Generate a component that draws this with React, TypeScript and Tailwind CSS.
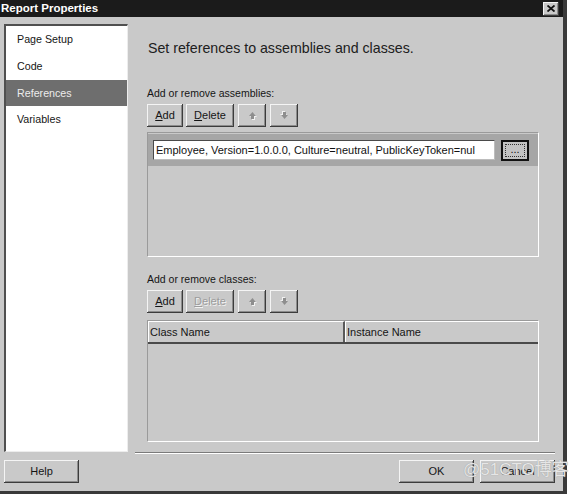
import React from "react";

const FONT = { fontFamily: '"Liberation Sans", Arial, "Noto Sans CJK SC", sans-serif' };

const raised =
  "bg-[#c9c9c9] shadow-[inset_-1px_-1px_0_#3c3c3c,inset_1px_1px_0_#f4f4f4,inset_-2px_-2px_0_#8c8c8c]";

function Btn({ children, className = "", disabled = false }: { children: React.ReactNode; className?: string; disabled?: boolean }) {
  return (
    <div
      className={`${raised} h-[23px] flex items-center justify-center text-[11px] leading-none ${
        disabled ? "text-[#9c9c9c] [text-shadow:1px_1px_0_#f2f2f2]" : "text-[#151515]"
      } ${className}`}
    >
      {children}
    </div>
  );
}

function Arrow({ down = false }: { down?: boolean }) {
  return (
    <svg width="9" height="9" viewBox="0 0 9 9" className={down ? "rotate-180" : ""}>
      <path d="M5.5 2 L9 6 H7 V9 H4 V6 H2 Z" fill="#f2f2f2" />
      <path d="M4.5 1 L8 5 H6 V8 H3 V5 H1 Z" fill="#8e8e8e" />
    </svg>
  );
}

function ButtonRow({ deleteDisabled }: { deleteDisabled?: boolean }) {
  return (
    <div className="flex ml-[12px]">
      <Btn className="w-[36px]">
        <span>
          <span className="underline">A</span>dd
        </span>
      </Btn>
      <Btn className="w-[48px] ml-[3px]" disabled={deleteDisabled}>
        <span>
          <span className="underline">D</span>elete
        </span>
      </Btn>
      <Btn className="w-[28px] ml-[4px]">
        <Arrow />
      </Btn>
      <Btn className="w-[28px] ml-[4px]">
        <Arrow down />
      </Btn>
    </div>
  );
}

export default function App() {
  const items = [
    { label: "Page Setup", h: "h-[27px]" },
    { label: "Code", h: "h-[27px]" },
    { label: "References", h: "h-[26px]", sel: true },
    { label: "Variables", h: "h-[26px]" },
  ];
  return (
    <div className="relative w-[570px] h-[497px] bg-white overflow-hidden" style={FONT}>
      <div className="w-[567px] h-[494px] bg-[#c9c9c9] border-r-4 border-b-[3px] border-[#3a3a3a] flex flex-col">
        {/* title bar */}
        <div className="h-[17px] bg-[#1b1b1b] flex items-center justify-between">
          <span className="pl-[1px] text-white font-bold text-[11.5px] leading-none">Report Properties</span>
          <div className={`${raised} w-[16px] h-[14px] mr-[4px] flex items-center justify-center`}>
            <svg width="8" height="7" viewBox="0 0 8 7">
              <path d="M0.5 0.5 L7.5 6.5 M7.5 0.5 L0.5 6.5" stroke="#111" strokeWidth="1.8" />
            </svg>
          </div>
        </div>

        <div className="flex-1 flex flex-col px-[4px] pt-[7px]">
          <div className="flex items-start h-[430px]">
            {/* sidebar */}
            <div className="w-[124px] h-[428px] bg-white border-l-2 border-t-2 border-l-[#505050] border-t-[#505050] border-r border-b border-r-[#ededed] border-b-[#ededed]">
              {items.map((it) => (
                <div
                  key={it.label}
                  className={`${it.h} flex items-center pl-[11px] text-[10.7px] ${
                    it.sel ? "bg-[#6e6e6e] text-[#ececec]" : "text-[#151515]"
                  }`}
                >
                  {it.label}
                </div>
              ))}
            </div>

            {/* main */}
            <div className="ml-[7px] w-[420px] flex flex-col">
              <div className="mt-[15px] pl-[13px] text-[14.2px] leading-[18px] text-[#202020]">
                Set references to assemblies and classes.
              </div>

              <div className="mt-[30px] pl-[12px] text-[10.5px] leading-[13px] text-[#151515]">Add or remove assemblies:</div>
              <div className="mt-[4px]">
                <ButtonRow />
              </div>

              <div className="mt-[5px] ml-[12px] w-[392px] h-[125px] border-t border-l border-t-[#9a9a9a] border-l-[#9a9a9a] border-r border-b border-r-white border-b-white">
                <div className="mt-[1px] h-[32px] bg-[#a6a6a6] flex items-center">
                  <div className="ml-[5px] w-[342px] h-[20px] bg-white border-t border-l border-t-[#4a4a4a] border-l-[#4a4a4a] border-r border-b border-r-[#bdbdbd] border-b-[#bdbdbd] flex items-center pl-[2px] text-[11px] text-[#111] whitespace-nowrap overflow-hidden">
                    Employee, Version=1.0.0.0, Culture=neutral, PublicKeyToken=nul
                  </div>
                  <div className="ml-[6px] w-[28px] h-[21px] border-2 border-[#111] bg-[#c4c4c4] p-[2px]">
                    <div className="w-full h-full border border-dotted border-[#333] flex items-end justify-center pb-[1px] text-[11px] leading-none text-[#111]">
                      ...
                    </div>
                  </div>
                </div>
              </div>

              <div className="mt-[16px] pl-[12px] text-[10.5px] leading-[13px] text-[#151515]">Add or remove classes:</div>
              <div className="mt-[4px]">
                <ButtonRow deleteDisabled />
              </div>

              <div className="mt-[7px] ml-[12px] w-[392px] h-[122px] border-t border-l border-t-[#9a9a9a] border-l-[#9a9a9a] border-r border-b border-r-white border-b-white">
                <div className="flex h-[23px] border-b-2 border-b-[#4a4a4a]">
                  <div className="w-[197px] h-full border-t border-l border-t-white border-l-white border-r-2 border-r-[#5a5a5a] flex items-center pl-[1px] text-[11px] text-[#151515]">
                    Class Name
                  </div>
                  <div className="flex-1 h-full border-t border-l border-t-white border-l-white flex items-center pl-[1px] text-[11px] text-[#151515]">
                    Instance Name
                  </div>
                </div>
              </div>

              <div className="mt-[10px] h-[2px] border-t border-t-[#7a7a7a] border-b border-b-white" />
            </div>
          </div>

          {/* bottom buttons */}
          <div className="mt-[6px] flex pr-[4px]">
            <Btn className="w-[75px]">Help</Btn>
            <Btn className="w-[75px] ml-auto">OK</Btn>
            <Btn className="w-[75px] ml-[6px]">Cancel</Btn>
          </div>
        </div>
      </div>

      {/* watermark */}
      <div
        className="absolute left-[463px] top-[459px] text-[17px] leading-[22px] text-[#e6e6e6] [text-shadow:0_0_1px_#8f8f8f] pointer-events-none"
        style={{ fontFamily: '"Liberation Sans", "Noto Sans CJK SC", sans-serif' }}
      >
        @51CTO博客
      </div>
    </div>
  );
}
